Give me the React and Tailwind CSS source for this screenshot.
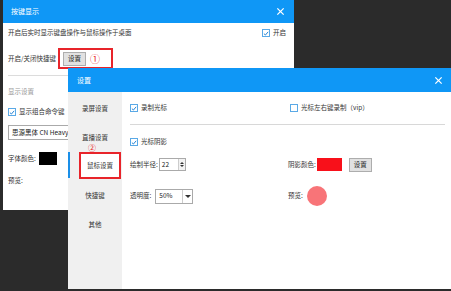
import React from 'react';

const font = { fontFamily: '"Noto Sans CJK SC", "Noto Sans", sans-serif' };

function Check({ checked = true }) {
  return (
    <span className="inline-flex h-[8px] w-[8px] items-center justify-center border border-[#5aa9e6] bg-white">
      {checked && (
        <svg width="7" height="7" viewBox="0 0 10 10">
          <path d="M1.5 5.2 L4 7.6 L8.6 2.2" fill="none" stroke="#1a7fd4" strokeWidth="1.6" />
        </svg>
      )}
    </span>
  );
}

function CloseX() {
  return (
    <svg width="9" height="9" viewBox="0 0 10 10">
      <path d="M1.5 1.5 L8.5 8.5 M8.5 1.5 L1.5 8.5" stroke="#fff" strokeWidth="1.4" />
    </svg>
  );
}

function SmallButton({ children }) {
  return (
    <span className="inline-flex h-[14px] items-center border border-[#adadad] bg-[#e1e1e1] px-[4px] text-[6.5px] leading-none text-[#222]">
      {children}
    </span>
  );
}

export default function App() {
  const tabs = ['录屏设置', '直播设置', '鼠标设置', '快捷键', '其他'];

  return (
    <div className="relative h-[291px] w-[451px] overflow-hidden bg-[#2b2b2b] text-[6.5px] text-[#333]" style={font}>
      {/* 按键显示 window */}
      <div className="absolute left-[3px] top-0 flex h-[210px] w-[291px] flex-col bg-white">
        <div className="flex h-[23px] items-center justify-between bg-[#0f97f6] pl-[8px] pr-[9px] text-[7px] text-white">
          <span>按键显示</span>
          <CloseX />
        </div>
        <div className="flex flex-col px-[5px]">
          <div className="mt-[3px] flex h-[14px] items-center justify-between">
            <span>开启后实时显示键盘操作与鼠标操作于桌面</span>
            <span className="flex items-center gap-[3px] pr-[3px]">
              <Check />
              <span>开启</span>
            </span>
          </div>
          <div className="mt-[8px] flex h-[21px] items-center">
            <span className="mr-[2px]">开启/关闭快捷键</span>
            <span className="flex h-[21px] w-[55px] items-center border-2 border-[#e8242a] pl-[3px]">
              <SmallButton>设置</SmallButton>
              <span className="ml-[4px] text-[10px] leading-none text-[#e8242a]">①</span>
            </span>
          </div>
          <div className="mt-[6px] h-px w-full bg-[#dcdcdc]" />
          <div className="mt-[10px] flex h-[12px] items-center text-[#999]">显示设置</div>
          <div className="mt-[8px] flex h-[12px] items-center gap-[3px]">
            <Check />
            <span>显示组合命令键</span>
          </div>
          <div className="mt-[7px] flex h-[15px] w-[90px] items-center border border-[#aaa] px-[3px] text-[#222]">
            思源黑体 CN Heavy
          </div>
          <div className="mt-[12px] flex h-[13px] items-center gap-[3px]">
            <span>字体颜色:</span>
            <span className="h-[13px] w-[18px] bg-black" />
          </div>
          <div className="mt-[10px] flex h-[12px] items-center">预览:</div>
        </div>
      </div>

      {/* 设置 window */}
      <div className="absolute left-[68px] top-[68px] flex h-[221px] w-[383px] flex-col bg-white">
        <div className="flex h-[24px] items-center justify-between bg-[#0f97f6] pl-[9px] pr-[8px] text-[7px] text-white">
          <span>设置</span>
          <CloseX />
        </div>
        <div className="flex flex-1">
          <div className="flex w-[54px] flex-col bg-[#f0f0f0] pt-[2px]">
            {tabs.map((t, i) => (
              <div key={t} className="relative flex h-[29px] items-center justify-center text-[#333]">
                {i === 2 && (
                  <>
                    <span className="absolute left-0 top-0 h-[26px] w-[2px] bg-[#1a8fe8]" />
                    <span className="absolute left-[11px] top-0 flex h-[27px] w-[42px] items-center justify-center border-2 border-[#e8242a] bg-white">
                      {t}
                    </span>
                    <span className="absolute left-[20px] top-[-8px] text-[8px] leading-none text-[#e8242a]">②</span>
                  </>
                )}
                {i !== 2 && t}
              </div>
            ))}
          </div>
          <div className="flex flex-1 flex-col pl-[8px] pr-[6px]">
            <div className="mt-[10px] flex h-[12px] items-center">
              <span className="flex w-[160px] items-center gap-[3px]">
                <Check />
                <span>录制光标</span>
              </span>
              <span className="flex items-center gap-[3px]">
                <Check checked={false} />
                <span>光标左右键录制（vip）</span>
              </span>
            </div>
            <div className="mt-[10px] h-px w-full bg-[#d8d8d8]" />
            <div className="mt-[11px] flex h-[12px] items-center gap-[3px]">
              <Check />
              <span>光标阴影</span>
            </div>
            <div className="mt-[10px] flex h-[13px] items-center">
              <span className="flex w-[158px] items-center">
                <span>绘制半径:</span>
                <span className="ml-[1px] flex h-[13px] w-[27px] items-center justify-between border border-[#aaa] pl-[2px]">
                  <span className="text-[#222]">22</span>
                  <span className="flex h-full w-[7px] flex-col items-center justify-center gap-[1px] border-l border-[#ccc] bg-[#f2f2f2]">
                    <span className="h-0 w-0 border-x-[2px] border-b-[2px] border-x-transparent border-b-[#333]" />
                    <span className="h-0 w-0 border-x-[2px] border-t-[2px] border-x-transparent border-t-[#333]" />
                  </span>
                </span>
              </span>
              <span>阴影颜色:</span>
              <span className="ml-[1px] h-[13px] w-[25px] bg-[#f8101a]" />
              <span className="ml-[7px]">
                <SmallButton>设置</SmallButton>
              </span>
            </div>
            <div className="mt-[15px] flex h-[20px] items-center">
              <span className="flex w-[158px] items-center">
                <span>透明度:</span>
                <span className="ml-[4px] flex h-[15px] w-[38px] items-center border border-[#aaa]">
                  <span className="flex-1 pl-[3px] text-[#222]">50%</span>
                  <span className="flex h-full w-[10px] items-center justify-center border-l border-[#ccc]">
                    <span className="h-0 w-0 border-x-[3px] border-t-[3px] border-x-transparent border-t-[#333]" />
                  </span>
                </span>
              </span>
              <span>预览:</span>
              <span className="ml-[4px] h-[20px] w-[20px] rounded-full bg-[#f87478]" />
            </div>
          </div>
        </div>
      </div>
    </div>
  );
}
